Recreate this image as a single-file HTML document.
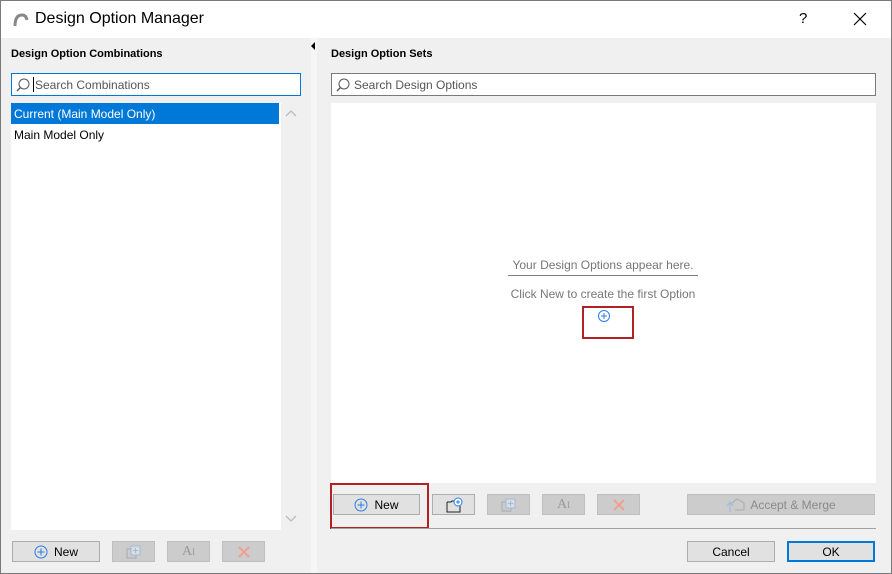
<!DOCTYPE html>
<html><head><meta charset="utf-8"><style>
*{box-sizing:border-box;margin:0;padding:0}
body{width:892px;height:574px;overflow:hidden;background:#f0f0f0;font-family:"Segoe UI","Liberation Sans",sans-serif;font-size:12px;color:#000;position:relative}
.a{position:absolute}
.btn{position:absolute;height:20px;border:1px solid #adadad;background:#e1e1e1;display:flex;align-items:center;justify-content:center;font-size:12px;padding-top:1px}
.dis{background:#cccccc;border-color:#bfbfbf;color:#8a8a8a}
</style></head><body>
<div class="a" style="left:0;top:0;width:892px;height:574px;border:1px solid #7a7a7a;z-index:5;pointer-events:none"></div>
<div class="a" style="left:0;top:0;width:892px;height:38px;background:#fff"></div>
<svg class="a" style="left:12px;top:11px" width="18" height="16"><path d="M3 15 Q3 4 10 4 Q14 4 15 9" stroke="#888" stroke-width="3" fill="none"/></svg>
<div class="a" style="left:35px;top:10px;font-size:16px">Design Option Manager</div>
<div class="a" style="left:799px;top:10px;font-size:15px">?</div>
<svg class="a" style="left:853px;top:12px" width="14" height="14"><path d="M1 1L13 13M13 1L1 13" stroke="#000" stroke-width="1.2"/></svg>
<div class="a" style="left:311px;top:38px;width:6px;height:536px;background:#f6f6f6"></div>
<svg class="a" style="left:310px;top:42px" width="6" height="8"><path d="M5 0L1 4L5 8Z" fill="#000"/></svg>
<div class="a" style="left:11px;top:48px;font-weight:bold;font-size:11px">Design Option Combinations</div>
<div class="a" style="left:11px;top:73px;width:290px;height:23px;background:#fff;border:1px solid #0078d7"></div>
<svg class="a" style="left:16px;top:78px" width="14" height="14"><circle cx="8" cy="6" r="5" stroke="#555" fill="none"/><path d="M4.5 9.5L1 13" stroke="#555" stroke-width="1.3"/></svg>
<div class="a" style="left:33px;top:77px;width:1px;height:15px;background:#000"></div>
<div class="a" style="left:35px;top:78px;color:#555">Search Combinations</div>
<div class="a" style="left:11px;top:103px;width:270px;height:427px;background:#fff"></div>
<div class="a" style="left:11px;top:103px;width:268px;height:21px;background:#0078d7;color:#fff;padding:4px 0 0 3px">Current (Main Model Only)</div>
<div class="a" style="left:14px;top:128px">Main Model Only</div>
<svg class="a" style="left:285px;top:109px" width="12" height="8"><path d="M1 7L6 2L11 7" stroke="#bbb" fill="none" stroke-width="1.3"/></svg>
<svg class="a" style="left:285px;top:515px" width="12" height="8"><path d="M1 1L6 6L11 1" stroke="#bbb" fill="none" stroke-width="1.3"/></svg>
<div class="btn" style="left:12px;top:541px;width:88px;height:21px"><svg width="14" height="14" style="margin-right:6px"><circle cx="7" cy="7" r="6" stroke="#2a7de1" fill="none"/><path d="M7 3.5V10.5M3.5 7H10.5" stroke="#2a7de1"/></svg>New</div>
<div class="btn dis" style="left:112px;top:541px;width:43px;height:21px"><svg width="16" height="14"><rect x="1" y="4" width="9" height="9" stroke="#aaa" fill="none"/><rect x="5" y="1" width="9" height="9" stroke="#9bbbe0" fill="#ddd"/><path d="M9.5 3V8M7 5.5H12" stroke="#9bbbe0"/></svg></div>
<div class="btn dis" style="left:167px;top:541px;width:43px;height:21px;font-size:14px;color:#999;font-family:'Liberation Serif',serif">A<sup style="font-size:9px">I</sup></div>
<div class="btn dis" style="left:222px;top:541px;width:43px;height:21px"><svg width="14" height="14"><path d="M2 2L12 12M12 2L2 12" stroke="#f0a090" stroke-width="2"/></svg></div>
<div class="a" style="left:331px;top:48px;font-weight:bold;font-size:11px">Design Option Sets</div>
<div class="a" style="left:331px;top:73px;width:545px;height:23px;background:#fff;border:1px solid #7a7a7a"></div>
<svg class="a" style="left:336px;top:78px" width="14" height="14"><circle cx="8" cy="6" r="5" stroke="#555" fill="none"/><path d="M4.5 9.5L1 13" stroke="#555" stroke-width="1.3"/></svg>
<div class="a" style="left:354px;top:78px;color:#555">Search Design Options</div>
<div class="a" style="left:331px;top:103px;width:545px;height:380px;background:#fff"></div>
<div class="a" style="left:508px;top:258px;width:190px;text-align:center;color:#777">Your Design Options appear here.</div>
<div class="a" style="left:508px;top:275px;width:190px;height:1px;background:#808080"></div>
<div class="a" style="left:490px;top:287px;width:226px;text-align:center;color:#777">Click New to create the first Option</div>
<svg class="a" style="left:597px;top:309px" width="14" height="14"><circle cx="7" cy="7" r="5.5" stroke="#2a7de1" fill="none"/><path d="M7 4V10M4 7H10" stroke="#2a7de1"/></svg>
<div class="a" style="left:582px;top:306px;width:52px;height:33px;border:2px solid #b22222"></div>
<div class="btn" style="left:333px;top:494px;width:87px;height:21px"><svg width="14" height="14" style="margin-right:6px"><circle cx="7" cy="7" r="6" stroke="#2a7de1" fill="none"/><path d="M7 3.5V10.5M3.5 7H10.5" stroke="#2a7de1"/></svg>New</div>
<div class="a" style="left:330px;top:483px;width:99px;height:46px;border:2px solid #b22222"></div>
<div class="btn" style="left:432px;top:494px;width:43px;height:21px"><svg width="18" height="16"><path d="M2 5H6L7 4H12M2 5V15H15V9" stroke="#222" fill="none"/><circle cx="13" cy="5" r="4" stroke="#2a7de1" fill="#fff"/><path d="M13 3V7M11 5H15" stroke="#2a7de1"/></svg></div>
<div class="btn dis" style="left:487px;top:494px;width:43px;height:21px"><svg width="16" height="14"><rect x="1" y="4" width="9" height="9" stroke="#aaa" fill="none"/><rect x="5" y="1" width="9" height="9" stroke="#9bbbe0" fill="#ddd"/><path d="M9.5 3V8M7 5.5H12" stroke="#9bbbe0"/></svg></div>
<div class="btn dis" style="left:542px;top:494px;width:43px;height:21px;font-size:14px;color:#999;font-family:'Liberation Serif',serif">A<sup style="font-size:9px">I</sup></div>
<div class="btn dis" style="left:597px;top:494px;width:43px;height:21px"><svg width="14" height="14"><path d="M2 2L12 12M12 2L2 12" stroke="#f0a090" stroke-width="2"/></svg></div>
<div class="btn dis" style="left:687px;top:494px;width:188px;height:21px"><svg width="20" height="16" style="margin-right:4px"><path d="M4 15V6M1 9L4 5L7 9" stroke="#9bbbe0" fill="none"/><path d="M6 6L11 2L18 6V13H9" stroke="#aaa" fill="none"/></svg>Accept &amp; Merge</div>
<div class="a" style="left:331px;top:528px;width:545px;height:1px;background:#a0a0a0"></div>
<div class="btn" style="left:687px;top:541px;width:88px;height:21px">Cancel</div>
<div class="btn" style="left:787px;top:541px;width:88px;height:21px;border:2px solid #0078d7">OK</div>
</body></html>
